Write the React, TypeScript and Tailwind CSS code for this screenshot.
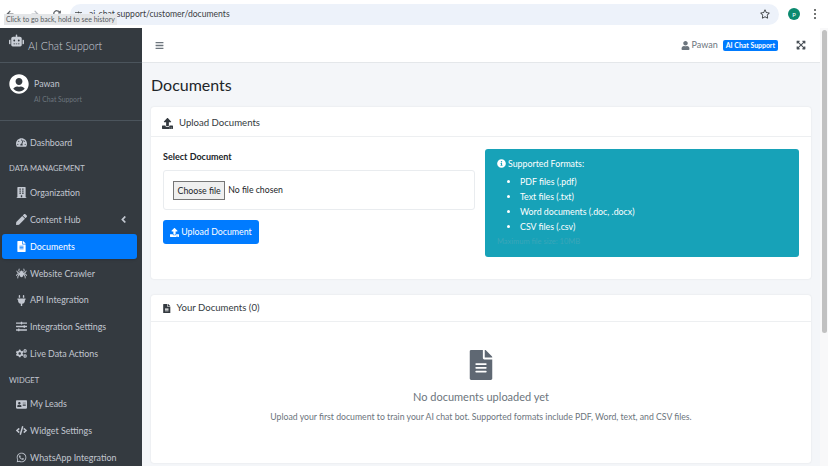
import type { ReactNode } from "react";
import {
  FaRobot,
  FaUserCircle,
  FaTachometerAlt,
  FaBuilding,
  FaPen,
  FaFileAlt,
  FaSpider,
  FaPlug,
  FaSlidersH,
  FaCogs,
  FaAddressCard,
  FaCode,
  FaWhatsapp,
  FaAngleLeft,
  FaUpload,
  FaInfoCircle,
  FaUser,
  FaExpandArrowsAlt,
  FaBars,
  FaArrowLeft,
  FaArrowRight,
  FaRedoAlt,
  FaRegStar,
} from "react-icons/fa";

function NavItem({ icon, label, active, caret }: { icon: ReactNode; label: string; active?: boolean; caret?: boolean }) {
  return (
    <div
      className={`mx-[2px] mb-[1.8px] flex h-[25px] w-[135px] items-center rounded-[3px] pl-[12px] text-[8.9px] whitespace-nowrap ${
        active ? "bg-[#007bff] text-white shadow" : "text-[#c2c7d0]"
      }`}
    >
      <span className="flex w-[14px] justify-center text-[11px]">{icon}</span>
      <span className="ml-[2px]">{label}</span>
      {caret && <FaAngleLeft className="ml-auto mr-[8px] text-[11px]" />}
    </div>
  );
}

function Heading({ label }: { label: string }) {
  return <div className="flex h-[23.6px] items-center pl-[9px] pt-[1px] text-[7.6px] text-[#c2c7d0]">{label}</div>;
}

function Sidebar() {
  return (
    <aside className="w-[142px] shrink-0 overflow-hidden bg-[#343a40] shadow-[2px_0_6px_rgba(0,0,0,0.25)]">
      <div className="flex h-[35px] items-center border-b border-[#4b545c] pl-[9px] pt-[2px] text-[#c9ced6]">
        <FaRobot className="-mt-[12px] text-[15px]" />
        <span className="ml-[4px] text-[10.7px] font-light">AI Chat Support</span>
      </div>
      <div className="flex h-[58px] items-start border-b border-[#4b545c] pl-[9px] pt-[11px]">
        <FaUserCircle className="text-[20px] text-white" />
        <div className="ml-[5px] mt-[3px]">
          <div className="text-[8.8px] leading-[13px] text-[#c2c7d0]">Pawan</div>
          <div className="mt-[4px] text-[6.8px] text-[#6c757d]">AI Chat Support</div>
        </div>
      </div>
      <div className="pt-[9px]">
        <NavItem icon={<FaTachometerAlt />} label="Dashboard" />
        <Heading label="DATA MANAGEMENT" />
        <NavItem icon={<FaBuilding />} label="Organization" />
        <NavItem icon={<FaPen />} label="Content Hub" caret />
        <NavItem icon={<FaFileAlt />} label="Documents" active />
        <NavItem icon={<FaSpider />} label="Website Crawler" />
        <NavItem icon={<FaPlug />} label="API Integration" />
        <NavItem icon={<FaSlidersH />} label="Integration Settings" />
        <NavItem icon={<FaCogs />} label="Live Data Actions" />
        <Heading label="WIDGET" />
        <NavItem icon={<FaAddressCard />} label="My Leads" />
        <NavItem icon={<FaCode />} label="Widget Settings" />
        <NavItem icon={<FaWhatsapp />} label="WhatsApp Integration" />
      </div>
    </aside>
  );
}

function BrowserBar() {
  return (
    <div className="relative flex h-[28px] items-center bg-white pl-[6px] pr-[12px]">
      <FaArrowLeft className="text-[8px] text-[#5f6368]" />
      <FaArrowRight className="ml-[17px] text-[8px] text-[#b8bcc2]" />
      <FaRedoAlt className="ml-[14px] text-[8px] text-[#5f6368]" />
      <div className="ml-[9px] flex h-[21px] flex-1 items-center rounded-full bg-[#edf2fa] pl-[5px] pr-[9px]">
        <FaSlidersH className="text-[7px] text-[#444746]" />
        <span className="ml-[7px] text-[8.6px] text-[#3c4043]">ai-chat.support/customer/documents</span>
        <FaRegStar className="ml-auto text-[10px] text-[#3c4043]" />
      </div>
      <div className="ml-[9px] flex h-[12px] w-[12px] items-center justify-center rounded-full bg-[#0b8a6f] text-[6px] text-white">P</div>
      <div className="ml-[14px] flex flex-col gap-[2px]">
        <span className="h-[2px] w-[2px] rounded-full bg-[#444746]" />
        <span className="h-[2px] w-[2px] rounded-full bg-[#444746]" />
        <span className="h-[2px] w-[2px] rounded-full bg-[#444746]" />
      </div>
      <div className="absolute left-[4px] top-[14px] bg-[#e4e6e8] px-[2px] text-[7px] leading-[11px] text-[#55595e]">
        Click to go back, hold to see history
      </div>
    </div>
  );
}

function Card({ title, icon, height, headerClass, children }: { title: string; icon: ReactNode; height: string; headerClass: string; children: ReactNode }) {
  return (
    <section className={`${height} rounded-[3px] bg-white shadow-[0_0_2px_rgba(0,0,0,0.1)]`}>
      <div className={`${headerClass} flex items-center border-b border-[#edeff1] pl-[11px] text-[9.6px] text-[#343a40]`}>
        {icon}
        <span>{title}</span>
      </div>
      {children}
    </section>
  );
}

export default function App() {
  return (
    <div className="flex h-[466px] w-[828px] flex-col overflow-hidden bg-white font-['Lato',sans-serif]">
      <BrowserBar />
      <div className="flex min-h-0 flex-1">
        <Sidebar />
        <div className="flex min-w-0 flex-1 flex-col bg-[#f4f6f9]">
          <header className="flex h-[35px] shrink-0 items-center border-b border-[#e4e7ea] bg-white pl-[13px] pr-[14px] text-[#6c757d]">
            <FaBars className="text-[9px]" />
            <FaUser className="ml-auto text-[9px]" />
            <span className="ml-[2px] text-[9px]">Pawan</span>
            <span className="ml-[5px] rounded-[2px] bg-[#007bff] px-[3px] text-[6.9px] font-bold leading-[11px] text-white">AI Chat Support</span>
            <FaExpandArrowsAlt className="ml-[18px] text-[10px] text-[#495057]" />
          </header>
          <main className="px-[9px]">
            <h1 className="flex h-[44px] items-center text-[16px] text-[#212529]">Documents</h1>
            <Card title="Upload Documents" icon={<FaUpload className="mr-[6px] text-[11px]" />} height="h-[172px]" headerClass="h-[30px] pt-[3px]">
              <div className="flex gap-[10px] px-[12px] pt-[12px]">
                <div className="w-[312px]">
                  <div className="text-[9px] font-bold leading-[16px] text-[#212529]">Select Document</div>
                  <div className="mt-[5px] flex h-[40px] items-center rounded-[3px] border border-[#e9ecef] pl-[9px]">
                    <span className="border border-[#767676] bg-[#efefef] px-[3.5px] py-[2px] text-[8.8px] leading-[13px] text-[#212529]">Choose file</span>
                    <span className="ml-[3px] text-[8.7px] text-[#212529]">No file chosen</span>
                  </div>
                  <div className="mt-[10px] flex h-[24px] w-[96px] items-center justify-center rounded-[3px] bg-[#007bff] text-[8.8px] text-white">
                    <FaUpload className="mr-[2px] text-[9px]" />
                    Upload Document
                  </div>
                </div>
                <div className="h-[108px] w-[314px] rounded-[3px] bg-[#17a2b8] pl-[12px] pt-[8px] text-[8.8px] text-white">
                  <div className="flex items-center leading-[13px]">
                    <FaInfoCircle className="mr-[2px] text-[9px]" />
                    Supported Formats:
                  </div>
                  <ul className="ml-[23px] mt-[4px] list-disc leading-[15px]">
                    <li>PDF files (.pdf)</li>
                    <li>Text files (.txt)</li>
                    <li>Word documents (.doc, .docx)</li>
                    <li>CSV files (.csv)</li>
                  </ul>
                  <div className="mt-[2px] text-[7.5px] leading-[11px] text-[#3aa6b8]">Maximum file size: 10MB</div>
                </div>
              </div>
            </Card>
            <div className="h-[16px]" />
            <Card title="Your Documents (0)" icon={<FaFileAlt className="mr-[5px] text-[9.5px]" />} height="h-[168px]" headerClass="h-[27px] pt-[1px]">
              <div className="flex flex-col items-center pt-[28px] text-[#6c757d]">
                <FaFileAlt className="text-[30px] text-[#5f6873]" />
                <div className="mt-[9px] text-[11px] leading-[16px]">No documents uploaded yet</div>
                <div className="mt-[5px] text-[8.7px] leading-[13px]">
                  Upload your first document to train your AI chat bot. Supported formats include PDF, Word, text, and CSV files.
                </div>
              </div>
            </Card>
          </main>
        </div>
        <div className="flex w-[8px] shrink-0 justify-center bg-[#f8f8f9]">
          <div className="mt-[2px] h-[303px] w-[5px] rounded-full bg-[#c1c1c1]" />
        </div>
      </div>
    </div>
  );
}
